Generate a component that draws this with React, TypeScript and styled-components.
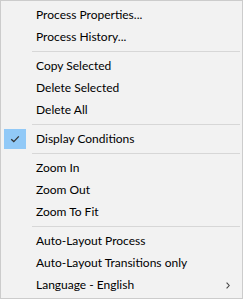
import React from "react";
import styled, { createGlobalStyle } from "styled-components";

const Global = createGlobalStyle`
  html, body {
    margin: 0;
    padding: 0;
    background: #fff;
  }
`;

const Menu = styled.div`
  box-sizing: border-box;
  width: 243px;
  height: 299px;
  background: #f2f2f2;
  border: 1px solid #cccccc;
  padding: 3px 2px 2px 2px;
  font-family: "Segoe UI", Lato, "Noto Sans", sans-serif;
  font-size: 12px;
  color: #000;
`;

const Item = styled.div`
  display: grid;
  grid-template-columns: 22px 1fr 20px;
  align-items: center;
  height: 22px;
  padding-left: 1px;
  column-gap: 10px;
`;

const Check = styled.div<{ $on?: boolean }>`
  height: 20px;
  display: flex;
  align-items: center;
  justify-content: center;
  background: ${(p) => (p.$on ? "#91c9f7" : "transparent")};
`;

const Label = styled.span`
  white-space: nowrap;
  line-height: 22px;
`;

const Arrow = styled.div`
  display: flex;
  align-items: center;
  justify-content: flex-end;
  padding-right: 10px;
`;

const Separator = styled.div`
  height: 7px;
  display: flex;
  align-items: center;
  padding-left: 29px;

  &::after {
    content: "";
    flex: 1;
    height: 1px;
    background: #d7d7d7;
  }
`;

type Entry = { label?: string; checked?: boolean; sub?: boolean; sep?: boolean };

const entries: Entry[] = [
  { label: "Process Properties..." },
  { label: "Process History..." },
  { sep: true },
  { label: "Copy Selected" },
  { label: "Delete Selected" },
  { label: "Delete All" },
  { sep: true },
  { label: "Display Conditions", checked: true },
  { sep: true },
  { label: "Zoom In" },
  { label: "Zoom Out" },
  { label: "Zoom To Fit" },
  { sep: true },
  { label: "Auto-Layout Process" },
  { label: "Auto-Layout Transitions only" },
  { label: "Language - English", sub: true },
];

const CheckMark = () => (
  <svg width="10" height="8" viewBox="0 0 10 8">
    <path d="M1.2 4.2 L3.8 6.6 L8.8 1.4" fill="none" stroke="#333" strokeWidth="1.3" />
  </svg>
);

const Chevron = () => (
  <svg width="4" height="7" viewBox="0 0 4 7">
    <path d="M0.6 0.6 L3.2 3.5 L0.6 6.4" fill="none" stroke="#444" strokeWidth="1.1" />
  </svg>
);

export default function App() {
  return (
    <>
      <Global />
      <Menu>
        {entries.map((e, i) =>
          e.sep ? (
            <Separator key={i} />
          ) : (
            <Item key={i}>
              <Check $on={e.checked}>{e.checked && <CheckMark />}</Check>
              <Label>{e.label}</Label>
              <Arrow>{e.sub && <Chevron />}</Arrow>
            </Item>
          )
        )}
      </Menu>
    </>
  );
}
